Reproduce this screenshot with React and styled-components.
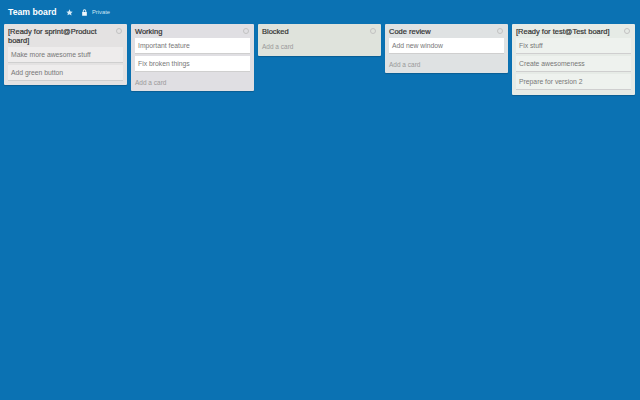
import React from 'react'
import styled, { createGlobalStyle } from 'styled-components'

const GlobalStyle = createGlobalStyle`
  html, body {
    margin: 0;
    height: 100%;
    background: #0b72b3;
    font-family: "Liberation Sans", Arial, sans-serif;
  }
`

const Page = styled.div`
  width: 640px;
  height: 400px;
  overflow: hidden;
  background: #0b72b3;
`

const Header = styled.div`
  height: 24px;
  padding-left: 8px;
  display: flex;
  align-items: center;
  color: #fff;
`

const BoardTitle = styled.div`
  width: 50px;
  font-size: 8.7px;
  font-weight: 700;
  white-space: nowrap;
`

const HeaderItem = styled.div`
  display: flex;
  align-items: center;
  gap: 4px;
  font-size: 5.8px;
  color: #cfe6f5;
  margin-left: 8px;
  svg { display: block; }
`

const Board = styled.div`
  display: flex;
  align-items: flex-start;
  gap: 4px;
  padding-left: 4px;
  opacity: 0.999;
`

const List = styled.div`
  width: 123px;
  box-sizing: border-box;
  padding: 3px 4px ${p => p.$pad}px;
  background: ${p => p.$bg || '#e2e2e4'};
  border-radius: 1px;
  box-shadow: 0 1px 1px rgba(0, 0, 0, 0.18);
`

const ListHead = styled.div`
  display: flex;
  justify-content: space-between;
  align-items: flex-start;
  margin-bottom: 2px;
`

const ListTitle = styled.div`
  width: 104px;
  font-size: 7.5px;
  line-height: 9px;
  font-weight: 500;
  color: #333;
  -webkit-text-stroke: 0.2px #333;
`

const Menu = styled.div`
  width: 6px;
  height: 6px;
  border: 1px solid #c2c2c2;
  border-radius: 50%;
  box-sizing: border-box;
  margin-top: 1px;
  margin-right: 1px;
`

const Card = styled.div`
  height: 16px;
  margin-bottom: 2px;
  padding-left: 3px;
  display: flex;
  align-items: center;
  font-size: 6.8px;
  color: #777;
  background: ${p => p.$bg || '#fff'};
  border-bottom: 1px solid #cfcfcf;
  box-sizing: border-box;
`

const AddCard = styled.div`
  height: 16px;
  display: flex;
  align-items: center;
  font-size: 6.5px;
  color: #999;
`

const lists = [
  {
    title: '[Ready for sprint@Product board]',
    bg: '#e4e2e2',
    cardBg: '#eeecec',
    pad: 2,
    cards: ['Make more awesome stuff', 'Add green button'],
  },
  {
    title: 'Working',
    bg: '#e0dfe3',
    pad: 1,
    cards: ['Important feature', 'Fix broken things'],
    add: 'Add a card',
  },
  { title: 'Blocked', bg: '#dfe3dc', pad: 2, cards: [], add: 'Add a card' },
  {
    title: 'Code review',
    bg: '#dfe2e3',
    pad: 1,
    cards: ['Add new window'],
    add: 'Add a card',
  },
  {
    title: '[Ready for test@Test board]',
    bg: '#e6ebe6',
    cardBg: '#eef2ee',
    pad: 3,
    cards: ['Fix stuff', 'Create awesomeness', 'Prepare for version 2'],
  },
]

function App() {
  return (
    <Page>
      <GlobalStyle />
      <Header>
        <BoardTitle>Team board</BoardTitle>
        <HeaderItem>
          <svg width="7" height="7" viewBox="0 0 24 24" fill="#d6ebf8">
            <path d="M12 1l3.4 7.2 7.6 1-5.6 5.4 1.5 7.9L12 18l-6.9 3.5 1.5-7.9L1 9.2l7.6-1z" />
          </svg>
        </HeaderItem>
        <HeaderItem>
          <svg width="7" height="7" viewBox="0 0 24 24" fill="#eef6fb">
            <path d="M6 10V7a6 6 0 0 1 12 0v3h2v13H4V10zm3 0h6V7a3 3 0 0 0-6 0z" />
          </svg>
          <span>Private</span>
        </HeaderItem>
      </Header>
      <Board>
        {lists.map(list => (
          <List key={list.title} $bg={list.bg} $pad={list.pad}>
            <ListHead>
              <ListTitle>{list.title}</ListTitle>
              <Menu />
            </ListHead>
            {list.cards.map(card => (
              <Card key={card} $bg={list.cardBg}>{card}</Card>
            ))}
            {list.add && <AddCard>{list.add}</AddCard>}
          </List>
        ))}
      </Board>
    </Page>
  )
}

export default App
